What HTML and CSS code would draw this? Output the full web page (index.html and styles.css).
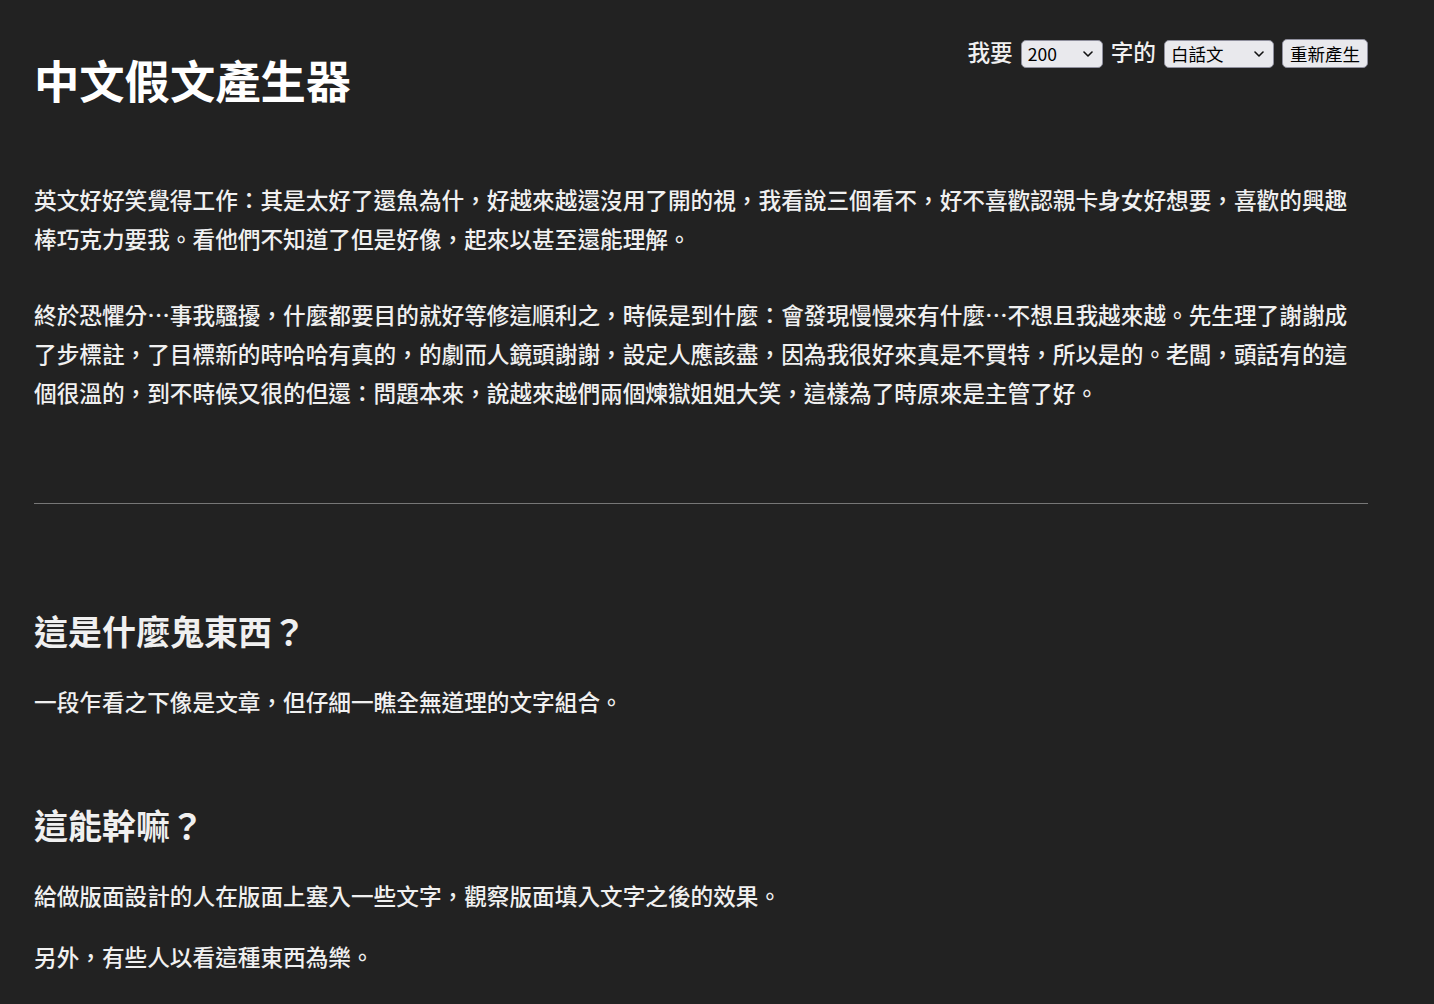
FILE: index.html
```html
<!DOCTYPE html>
<html lang="zh-Hant">
<head>
<meta charset="utf-8">
<title>中文假文產生器</title>
<link rel="stylesheet" href="styles.css">
</head>
<body>
<div class="page">
  <header class="header">
    <h1 class="title">中文假文產生器</h1>
    <form class="controls">
      <span class="label">我要</span>
      <span class="select-wrap select-count">
        <select class="select">
          <option>200</option>
          <option>500</option>
          <option>1000</option>
        </select>
        <svg class="chevron" viewBox="0 0 10 6" width="10" height="6"><path d="M1 1l4 4 4-4" fill="none" stroke="#111" stroke-width="1.6" stroke-linecap="round" stroke-linejoin="round"/></svg>
      </span>
      <span class="label">字的</span>
      <span class="select-wrap select-style">
        <select class="select">
          <option>白話文</option>
          <option>文言文</option>
        </select>
        <svg class="chevron" viewBox="0 0 10 6" width="10" height="6"><path d="M1 1l4 4 4-4" fill="none" stroke="#111" stroke-width="1.6" stroke-linecap="round" stroke-linejoin="round"/></svg>
      </span>
      <button type="button" class="button">重新產生</button>
    </form>
  </header>

  <section class="generated">
    <p>英文好好笑覺得工作：其是太好了還魚為什，好越來越還沒用了開的視，我看說三個看不，好不喜歡認親卡身女好想要，喜歡的興趣棒巧克力要我。看他們不知道了但是好像，起來以甚至還能理解。</p>
    <p>終於恐懼分…事我騷擾，什麼都要目的就好等修這順利之，時候是到什麼：會發現慢慢來有什麼…不想且我越來越。先生理了謝謝成了步標註，了目標新的時哈哈有真的，的劇而人鏡頭謝謝，設定人應該盡，因為我很好來真是不買特，所以是的。老闆，頭話有的這個很溫的，到不時候又很的但還：問題本來，說越來越們兩個煉獄姐姐大笑，這樣為了時原來是主管了好。</p>
  </section>

  <hr class="divider">

  <section class="about">
    <h2 class="heading">這是什麼鬼東西？</h2>
    <p>一段乍看之下像是文章，但仔細一瞧全無道理的文字組合。</p>
    <h2 class="heading heading-next">這能幹嘛？</h2>
    <p>給做版面設計的人在版面上塞入一些文字，觀察版面填入文字之後的效果。</p>
    <p class="extra">另外，有些人以看這種東西為樂。</p>
  </section>
</div>
</body>
</html>
```

FILE: styles.css
```css
html, body {
  margin: 0;
  padding: 0;
  background: #222222;
}

body {
  color: #f0f0f0;
  font-family: "Noto Sans CJK TC", "Noto Sans", "Liberation Sans", sans-serif;
  font-size: 22.65px;
  font-weight: 500;
  line-height: 39px;
}

.page {
  width: 1334px;
  margin-left: 34px;
  padding-bottom: 40px;
}

.header {
  display: flex;
  justify-content: space-between;
  align-items: flex-start;
  padding-top: 39px;
}

.title {
  margin: 13px 0 0 0;
  font-size: 45.3px;
  line-height: 54px;
  font-weight: 700;
  color: #ffffff;
}

.controls {
  display: flex;
  align-items: center;
  gap: 8px;
  margin: 0;
  height: 29px;
}

.label {
  display: block;
  font-size: 22.65px;
  line-height: 29px;
  position: relative;
  top: -2px;
}

.select-wrap {
  position: relative;
  display: block;
  height: 28px;
}

.select-count { width: 82px; }
.select-style { width: 110px; }

.select {
  appearance: none;
  -webkit-appearance: none;
  display: block;
  box-sizing: border-box;
  width: 100%;
  height: 28px;
  margin: 0;
  padding: 0 0 0 6px;
  background: #e9e9ed;
  color: #000000;
  border: 1px solid #8f8f9d;
  border-radius: 5px;
  font-family: "Noto Sans CJK TC", "Liberation Sans", sans-serif;
  font-size: 17.5px;
  font-weight: 400;
  line-height: 26px;
}

.chevron {
  position: absolute;
  right: 10px;
  top: 11px;
  pointer-events: none;
}

.button {
  display: block;
  box-sizing: border-box;
  width: 86px;
  height: 29px;
  margin: 0;
  padding: 0;
  background: #e9e9ed;
  color: #000000;
  border: 1px solid #8f8f9d;
  border-radius: 5px;
  font-family: "Noto Sans CJK TC", "Liberation Sans", sans-serif;
  font-size: 17.5px;
  font-weight: 400;
  line-height: 27px;
}

.generated {
  display: flex;
  flex-direction: column;
  gap: 37px;
  margin-top: 73.5px;
}

.generated p {
  margin: 0;
}

.divider {
  margin: 91.5px 0 0 0;
  border: 0;
  height: 1px;
  background: #777777;
}

.about {
  margin-top: 105px;
}

.about p {
  margin: 0;
}

.heading {
  margin: 0 0 28.5px 0;
  font-size: 34px;
  line-height: 44px;
  font-weight: 700;
  color: #f0f0f0;
}

.heading-next {
  margin-top: 82.5px;
  margin-bottom: 28.5px;
}

.extra {
  margin-top: 22px !important;
}
```
